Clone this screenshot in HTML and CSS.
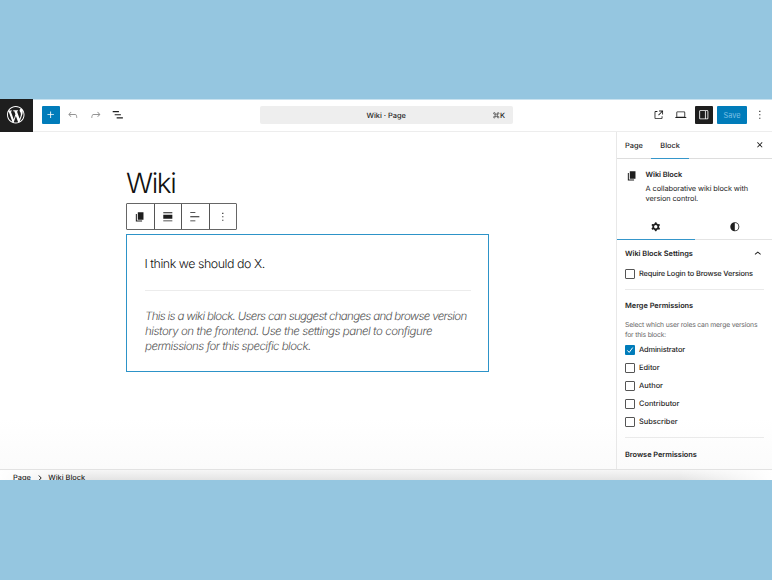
FILE: index.html
```html
<!DOCTYPE html>
<html lang="en">
<head>
<meta charset="utf-8">
<title>Wiki · Page</title>
<link rel="stylesheet" href="styles.css">
</head>
<body>
<div class="app">
  <header class="topbar">
    <div class="logo"><svg viewBox="0 0 20 20"><path d="M20 10c0-5.51-4.49-10-10-10C4.48 0 0 4.49 0 10c0 5.52 4.48 10 10 10 5.51 0 10-4.48 10-10zM7.78 15.37L4.37 6.22c.55-.02 1.17-.08 1.17-.08.5-.06.44-1.13-.06-1.11 0 0-1.45.11-2.37.11-.18 0-.37 0-.58-.01C4.12 2.69 6.87 1.11 10 1.11c2.33 0 4.45.87 6.05 2.34-.68-.11-1.65.39-1.65 1.58 0 .74.45 1.36.9 2.1.35.61.55 1.36.55 2.46 0 1.49-1.4 5-1.4 5l-3.03-8.37c.54-.02.82-.17.82-.17.5-.05.44-1.25-.06-1.22 0 0-1.44.12-2.38.12-.87 0-2.33-.12-2.33-.12-.5-.03-.56 1.2-.06 1.22l.92.08 1.26 3.41zM17.41 10c.24-.64.74-1.87.43-4.25.7 1.29 1.05 2.71 1.05 4.25 0 3.29-1.73 6.24-4.4 7.78.97-2.59 1.94-5.2 2.92-7.78zM6.1 18.09C3.12 16.65 1.11 13.53 1.11 10c0-1.3.23-2.48.72-3.59C3.25 10.3 4.67 14.2 6.1 18.09zm4.03-6.63l2.58 6.98c-.86.29-1.76.45-2.71.45-.79 0-1.57-.11-2.29-.33.81-2.38 1.62-4.74 2.42-7.1z"/></svg></div>
    <div class="tools">
      <button class="btn primary"><svg class="icon" viewBox="0 0 24 24"><path d="M11 12.5V17.5H12.5V12.5H17.5V11H12.5V6H11V11H6V12.5H11Z"/></svg></button>
      <button class="btn muted"><svg class="icon" viewBox="0 0 24 24"><path d="M18.3 11.7c-.6-.6-1.4-.9-2.3-.9H6.7l2.9-3.3-1.1-1-4.5 5L8.5 16l1-1-2.7-2.7H16c.5 0 .9.2 1.3.5 1 1 1 3.4 1 4.5v.3h1.5v-.2c0-1.5 0-4.3-1.5-5.7z"/></svg></button>
      <button class="btn muted"><svg class="icon" viewBox="0 0 24 24"><path d="M15.6 6.5l-1.1 1 2.9 3.3H8c-.9 0-1.7.3-2.3.9-1.4 1.5-1.4 4.2-1.4 5.6v.2h1.5v-.3c0-1.1 0-3.5 1-4.5.3-.3.7-.5 1.3-.5h9.2L14.5 15l1.1 1.1 4.6-4.6-4.6-5z"/></svg></button>
      <button class="btn"><svg class="icon" viewBox="0 0 24 24"><path d="M3 5.5h11v1.9H3zM6.5 11h11v1.9h-11zM10 16.5h11v1.9H10z"/></svg></button>
    </div>
    <div class="command"><span class="command-title">Wiki · Page</span><span class="shortcut"><svg viewBox="0 0 12 12"><path d="M4 4h4v4H4zM4 4H2.7A1.5 1.5 0 1 1 4 2.7zM8 4V2.7A1.5 1.5 0 1 1 9.3 4zM8 8h1.3A1.5 1.5 0 1 1 8 9.3zM4 8v1.3A1.5 1.5 0 1 1 2.7 8z"/></svg>K</span></div>
    <div class="actions">
      <button class="btn"><svg class="icon" viewBox="0 0 24 24"><path d="M19.5 4.5h-7V6h4.44l-5.97 5.97 1.06 1.06L18 7.06v4.44h1.5v-7Zm-13 1a2 2 0 0 0-2 2v10a2 2 0 0 0 2 2h10a2 2 0 0 0 2-2v-3H17v3a.5.5 0 0 1-.5.5h-10a.5.5 0 0 1-.5-.5v-10a.5.5 0 0 1 .5-.5h3V5.5h-3Z"/></svg></button>
      <button class="btn"><svg class="icon" viewBox="0 0 24 24"><path d="M20.5 16h-.7V8c0-1.1-.9-2-2-2H6.2c-1.1 0-2 .9-2 2v8h-.7c-.8 0-1.5.7-1.5 1.5h20c0-.8-.7-1.5-1.5-1.5zM5.7 8c0-.3.2-.5.5-.5h11.6c.3 0 .5.2.5.5v7.6H5.7V8z"/></svg></button>
      <button class="btn dark"><svg class="icon" viewBox="0 0 24 24"><path d="M18 4H6c-1.1 0-2 .9-2 2v12c0 1.1.9 2 2 2h12c1.1 0 2-.9 2-2V6c0-1.1-.9-2-2-2zm-4 14.5H6c-.3 0-.5-.2-.5-.5V6c0-.3.2-.5.5-.5h8v13zm4.5-.5c0 .3-.2.5-.5.5h-2.5v-13H18c.3 0 .5.2.5.5v12z"/></svg></button>
      <button class="btn save">Save</button>
      <button class="btn more"><svg class="icon" viewBox="0 0 24 24"><path d="M13 19h-2v-2h2v2zm0-6h-2v-2h2v2zm0-6h-2V5h2v2z"/></svg></button>
    </div>
  </header>
  <div class="body">
    <main class="canvas">
      <h1>Wiki</h1>
      <div class="toolbar">
        <span><svg class="icon" viewBox="0 0 24 24"><path d="M8.500 4h10v13h-10zM5 7h1.800v11.700H16v1.500H5z"/></svg></span>
        <span><svg class="icon" viewBox="0 0 24 24"><path d="M4 4h16v1.600H4zM4 8.500h16v7H4zM4 18.400h16V20H4z"/></svg></span>
        <span><svg class="icon" viewBox="0 0 24 24"><path d="M4 4h9v1.500H4zM4 11.250h16v1.500H4zM4 18.500h9V20H4z"/></svg></span>
        <span><svg class="icon" viewBox="0 0 24 24"><path d="M13 19h-2v-2h2v2zm0-6h-2v-2h2v2zm0-6h-2V5h2v2z"/></svg></span>
      </div>
      <section class="block">
        <p class="content">I think we should do X.</p>
        <p class="note"><span class="l1">This is a wiki block. Users can suggest changes and browse version</span><br><span class="l2">history on the frontend. Use the settings panel to configure</span><br><span class="l3">permissions for this specific block.</span></p>
      </section>
    </main>
    <aside class="sidebar">
      <nav class="tabs"><span class="tab">Page</span><span class="tab active">Block</span><svg class="icon close" viewBox="0 0 24 24"><path d="M12 13.06l3.712 3.713 1.061-1.06L13.061 12l3.712-3.712-1.06-1.06L12 10.938 8.288 7.227l-1.061 1.06L10.939 12l-3.712 3.712 1.06 1.061L12 13.061z"/></svg></nav>
      <div class="card">
        <svg class="icon" viewBox="0 0 24 24"><path d="M8.500 4h10v13h-10zM5 7h1.800v11.700H16v1.500H5z"/></svg>
        <div><h2>Wiki Block</h2><p>A collaborative wiki block with<br>version control.</p></div>
      </div>
      <div class="subtabs">
        <span class="active"><svg class="icon" viewBox="0 0 24 24"><path fill-rule="evenodd" d="M10.289 4.836A1 1 0 0111.275 4h1.306a1 1 0 01.987.836l.244 1.466c.787.26 1.503.679 2.108 1.218l1.393-.522a1 1 0 011.216.437l.653 1.130a1 1 0 01-.23 1.273l-1.148.944a6.025 6.025 0 010 2.435l1.149.946a1 1 0 01.23 1.272l-.653 1.130a1 1 0 01-1.216.437l-1.394-.522c-.605.54-1.320.958-2.108 1.218l-.244 1.466a1 1 0 01-.987.836h-1.306a1 1 0 01-.986-.836l-.244-1.466a5.995 5.995 0 01-2.108-1.218l-1.394.522a1 1 0 01-1.217-.436l-.653-1.131a1 1 0 01.23-1.272l1.149-.946a6.026 6.026 0 010-2.435l-1.148-.944a1 1 0 01-.23-1.272l.653-1.131a1 1 0 011.217-.437l1.393.522a5.994 5.994 0 012.108-1.218l.244-1.466zM14.929 12a3 3 0 11-6 0 3 3 0 016 0z"/></svg></span>
        <span class="styles"><svg class="icon" viewBox="0 0 24 24"><path fill-rule="evenodd" d="M20 12a8 8 0 1 1-16 0 8 8 0 0 1 16 0Zm-1.500 0a6.500 6.500 0 0 1-6.500 6.500v-13a6.500 6.500 0 0 1 6.500 6.500Z"/></svg></span>
      </div>
      <div class="panel">
        <h3 class="panel-title"><span>Wiki Block Settings</span><svg class="icon" viewBox="0 0 24 24"><path d="M6.500 12.400L12 8l5.500 4.400-.9 1.200L12 10l-4.500 3.600-1-1.200z"/></svg></h3>
        <label class="check"><i></i><span class="wide">Require Login to Browse Versions</span></label>
        <hr>
        <h3 class="merge">Merge Permissions</h3>
        <p class="help">Select which user roles can merge versions<br>for this block:</p>
        <label class="check"><i class="on"><svg viewBox="0 0 10 10"><path d="M2.300 5.400L4.200 7.400L7.700 2.600"/></svg></i><span class="wide">Administrator</span></label>
        <label class="check"><i></i><span>Editor</span></label>
        <label class="check"><i></i><span>Author</span></label>
        <label class="check"><i></i><span>Contributor</span></label>
        <label class="check"><i></i><span>Subscriber</span></label>
        <hr>
        <h3 class="browse">Browse Permissions</h3>
      </div>
    </aside>
  </div>
  <footer class="crumbs"><span>Page</span><svg viewBox="0 0 6 8"><path d="M1.800 1.500L4.200 4L1.800 6.500"/></svg><span>Wiki Block</span></footer>
</div>
</body>
</html>
```
FILE: styles.css
```css
* { box-sizing: border-box; }
body {
  margin: 0;
  height: 580px;
  padding-top: 99px;
  overflow: hidden;
  background: #95c6e0;
  color: #1e1e1e;
  font: 500 7.4px/10px Inter, sans-serif;
  text-rendering: geometricPrecision;
}
h1, h2, h3, p { margin: 0; }
svg { display: block; flex: none; }
.icon { width: 13.6px; height: 13.6px; fill: currentColor; }
.app {
  display: flex;
  flex-direction: column;
  height: 381px;
  overflow: hidden;
  background: #fff;
  box-shadow: inset 0 1px #c9e2ef;
}

.topbar {
  display: flex;
  flex: none;
  height: 33px;
  border-bottom: 1.5px solid #ededed;
}
.logo {
  display: grid;
  place-items: center;
  width: 32.5px;
  height: 33px;
  padding-right: 1px;
  background: #1e1e1e;
}
.logo svg { width: 17.5px; height: 17.5px; margin-top: -1px; fill: #fff; }
.tools { display: flex; gap: 4.5px; padding: 7px 0 0 9px; }
.btn {
  display: grid;
  place-items: center;
  width: 18px;
  height: 18px;
  padding: 0;
  border: 0;
  border-radius: 1px;
  background: none;
  color: #1e1e1e;
  font: inherit;
}
.primary { background: #007cba; color: #fff; }
.muted { color: #949494; }
.dark { background: #1e1e1e; color: #fff; }
.command {
  display: flex;
  align-items: center;
  width: 253px;
  height: 18px;
  margin: 7px 0 0 133px;
  padding: 1px 8px 0 0;
  border-radius: 2px;
  background: #eee;
}
.command-title { flex: 1; padding-left: 19px; text-align: center; font-weight: 450; }
.shortcut { display: flex; align-items: center; }
.shortcut svg { width: 6.5px; height: 6.5px; fill: none; stroke: #1e1e1e; stroke-width: 1; }
.actions { display: flex; gap: 4.5px; margin-left: auto; padding: 7px 3px 0 0; }
.save { width: 30px; padding-top: 1px; background: #007cba; color: #7cc0e5; font-weight: 400; }
.more { margin-left: -0.5px; }

.body { display: flex; flex: 1; min-height: 0; background: linear-gradient(#fff 85%, #fbfbfb); }
.canvas { flex: 1; padding: 34px 0 0 126px; }
h1 {
  color: #111;
  font-size: 28px;
  line-height: 34px;
  font-weight: 350;
  letter-spacing: -1.4px;
}
.toolbar {
  display: flex;
  width: 111px;
  height: 27px;
  margin-top: 3px;
  border: 1px solid #666;
  border-radius: 1px;
}
.toolbar span { display: grid; flex: 1; place-items: center; }
.toolbar span + span { border-left: 1px solid #555; }
.block {
  width: 363px;
  height: 138px;
  margin-top: 4px;
  padding: 18.5px 17.5px;
  border: 1px solid #2d93c8;
  border-bottom-width: 1.5px;
}
.content {
  height: 37px;
  border-bottom: 1px solid #ececec;
  color: #111;
  font-size: 12.4px;
  line-height: 20px;
  font-weight: 350;
  letter-spacing: -0.45px;
}
.note {
  padding: 18.5px 0 0 0.5px;
  color: #555;
  font-size: 11.5px;
  line-height: 15px;
  font-style: italic;
  font-weight: 350;
  white-space: nowrap;
}
.l1 { letter-spacing: -0.67px; }
.l2 { letter-spacing: -0.45px; }
.l3 { letter-spacing: -0.53px; }

.sidebar { width: 156px; border-left: 1.5px solid #e8e8e8; }
.tabs {
  display: flex;
  align-items: center;
  height: 27px;
  padding-right: 5px;
  border-bottom: 1px solid #ddd;
}
.tab { height: 27px; padding: 0 9px; line-height: 27px; font-weight: 450; }
.tab:first-child { padding: 0 8.5px 0 8px; }
.tab.active { border-bottom: 1.5px solid #3596ca; }
.close { margin-left: auto; }
.card { display: flex; gap: 7px; padding: 10.5px 0 0 8px; }
.card h2 { font-size: 7.4px; line-height: 10px; font-weight: 600; letter-spacing: -0.08px; }
.card p { padding-top: 4px; line-height: 10.5px; font-weight: 400; letter-spacing: -0.1px; white-space: nowrap; }
.card .icon { margin-top: -1px; }
.subtabs { display: flex; height: 26px; margin-top: 9.5px; border-bottom: 1px solid #e4e4e4; }
.subtabs span { display: grid; flex: 1 1 0; place-items: center; }
.subtabs .active { flex: none; width: 78px; border-bottom: 1px solid #3596ca; margin-bottom: -1px; }
.subtabs .styles { padding-left: 2px; }
.panel { padding: 0 8px; }
h3 { font-size: 7.4px; line-height: 10px; font-weight: 600; letter-spacing: -0.03px; }
.panel-title { display: flex; align-items: center; justify-content: space-between; height: 27px; margin-right: -1px; }
.check { display: flex; align-items: center; gap: 4px; height: 10px; margin-bottom: 8px; font-weight: 450; white-space: nowrap; }
.check i { width: 10px; height: 10px; flex: none; border: 1px solid #555; border-radius: 1px; }
.check .wide { letter-spacing: -0.14px; }
.check .on { border: 0; background: #007cba; }
.check svg { width: 10px; height: 10px; fill: none; stroke: #fff; stroke-width: 1; }
.panel-title + .check { margin: 2px 0 10px; }
hr { height: 1px; margin: 0; border: 0; background: #eaeaea; }
.merge { padding-top: 11px; }
.help { padding: 9px 0 5px; color: #666; font-size: 6.8px; line-height: 10px; font-weight: 400; letter-spacing: -0.18px; white-space: nowrap; }
.check + hr { margin-top: 10px; }
.browse { padding-top: 11.5px; }

.crumbs {
  display: flex;
  flex: none;
  align-items: flex-start;
  height: 11px;
  padding: 2.5px 0 0 13px;
  border-top: 1px solid #e2e2e2;
  background:
    linear-gradient(90deg, #fff, transparent 12%, transparent 88%, #fff),
    linear-gradient(#f6f6f6, #e4e4e4);
  font-weight: 450;
}
.crumbs svg { width: 6px; height: 8px; margin: 1px 5.5px 0 6px; fill: none; stroke: #1e1e1e; stroke-width: 1; }
```
